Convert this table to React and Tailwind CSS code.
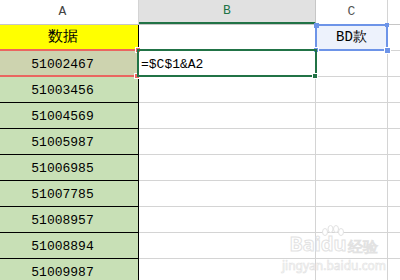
import React from "react";

const numbers = [
  "51003456",
  "51004569",
  "51005987",
  "51006985",
  "51007785",
  "51008957",
  "51008894",
  "51009987",
];

function Row({ aClass, aText, bText, cClass, cText }) {
  return (
    <div className="flex h-[26px]">
      <div
        className={`w-[139px] shrink-0 border-r border-b border-black flex items-center justify-center pr-[13px] pt-[2px] text-[13px] text-black ${aClass}`}
      >
        {aText}
      </div>
      <div className="w-[177px] shrink-0 border-r border-b border-[#d4d4d4] flex items-center pl-[2px] pt-[2px] text-[13px] text-black whitespace-nowrap">
        {bText}
      </div>
      <div
        className={`w-[72px] shrink-0 border-r border-b border-[#d4d4d4] flex items-center justify-center text-[14px] text-black ${cClass || ""}`}
      >
        {cText}
      </div>
      <div className="flex-1 border-b border-[#d4d4d4]" />
    </div>
  );
}

export default function App() {
  return (
    <div className="relative w-[400px] h-[280px] overflow-hidden bg-white font-mono">
      {/* column headers */}
      <div className="flex h-[25px] border-b border-[#c6c6c6] text-[13px]">
        <div className="w-[139px] shrink-0 border-r border-[#d4d4d4] flex items-center justify-center pr-[13px] text-[#444]">
          A
        </div>
        <div className="w-[177px] shrink-0 border-r border-[#c6c6c6] bg-[#e1e1e1] border-b-2 border-b-[#217346] flex items-center justify-center text-[#217346]">
          B
        </div>
        <div className="w-[72px] shrink-0 border-r border-[#d4d4d4] flex items-center justify-center text-[#555]">
          C
        </div>
        <div className="flex-1" />
      </div>

      {/* sheet rows */}
      <Row
        aClass="bg-[#ffff00] text-[15px] pt-0"
        aText="数据"
        bText=""
        cClass="bg-[#edf2fc]"
        cText="BD款"
      />
      <Row aClass="bg-[#cdd3af]" aText="51002467" bText="=$C$1&A2" />
      {numbers.map((n) => (
        <Row key={n} aClass="bg-[#c8e0b6]" aText={n} bText="" />
      ))}

      {/* A2 reference outline (red) */}
      <div className="absolute left-0 top-[49px] w-[138px] h-[28px] border-y-2 border-[#ea6660]">
        <div className="absolute right-[-3px] top-[-4px] w-[6px] h-[6px] bg-[#ea6660] border border-white" />
        <div className="absolute right-[-2px] bottom-[-4px] w-[6px] h-[6px] bg-[#ea6660] border border-white" />
      </div>

      {/* C1 reference outline (blue) */}
      <div className="absolute left-[315px] top-[24px] w-[73px] h-[27px] border-2 border-[#6d94e8]">
        <div className="absolute left-[-3px] top-[-3px] w-[5px] h-[5px] bg-[#6d94e8]" />
        <div className="absolute left-[-4px] bottom-[-4px] w-[6px] h-[6px] bg-[#6d94e8] border border-white" />
        <div className="absolute right-[-3px] top-[-3px] w-[4px] h-[4px] bg-[#6d94e8]" />
        <div className="absolute right-[-5px] bottom-[-5px] w-[7px] h-[7px] bg-[#6d94e8] border border-white" />
      </div>

      {/* active cell B2 */}
      <div className="absolute left-[137px] top-[49px] w-[180px] h-[28px] border-2 border-[#217346]">
        <div className="absolute right-[-3px] bottom-[-4px] w-[6px] h-[6px] bg-[#217346] border border-white" />
      </div>

      {/* watermark */}
      <div className="absolute left-[282px] top-[234px] flex flex-col items-center pointer-events-none select-none font-sans text-white [-webkit-text-stroke:1px_#e2e2e2]">
        <div className="flex items-end font-bold text-[20px] leading-none">
          <span>Bai</span>
          <span className="relative">
            <svg
              className="absolute left-[0px] top-[-9px]"
              width="24"
              height="12"
              viewBox="0 0 24 12"
              fill="white"
              stroke="#e2e2e2"
              strokeWidth="1"
            >
              <ellipse cx="4" cy="7" rx="2.5" ry="3.5" />
              <ellipse cx="9.5" cy="4" rx="2.5" ry="3.5" />
              <ellipse cx="15" cy="4" rx="2.5" ry="3.5" />
              <ellipse cx="20" cy="7" rx="2.5" ry="3.5" />
            </svg>
            du
          </span>
          <span className="text-[15px] ml-[2px] font-normal">经验</span>
        </div>
        <div className="text-[12px] leading-none mt-[6px] [-webkit-text-stroke:0.6px_#e2e2e2]">
          jingyan.baidu.com
        </div>
      </div>
    </div>
  );
}
